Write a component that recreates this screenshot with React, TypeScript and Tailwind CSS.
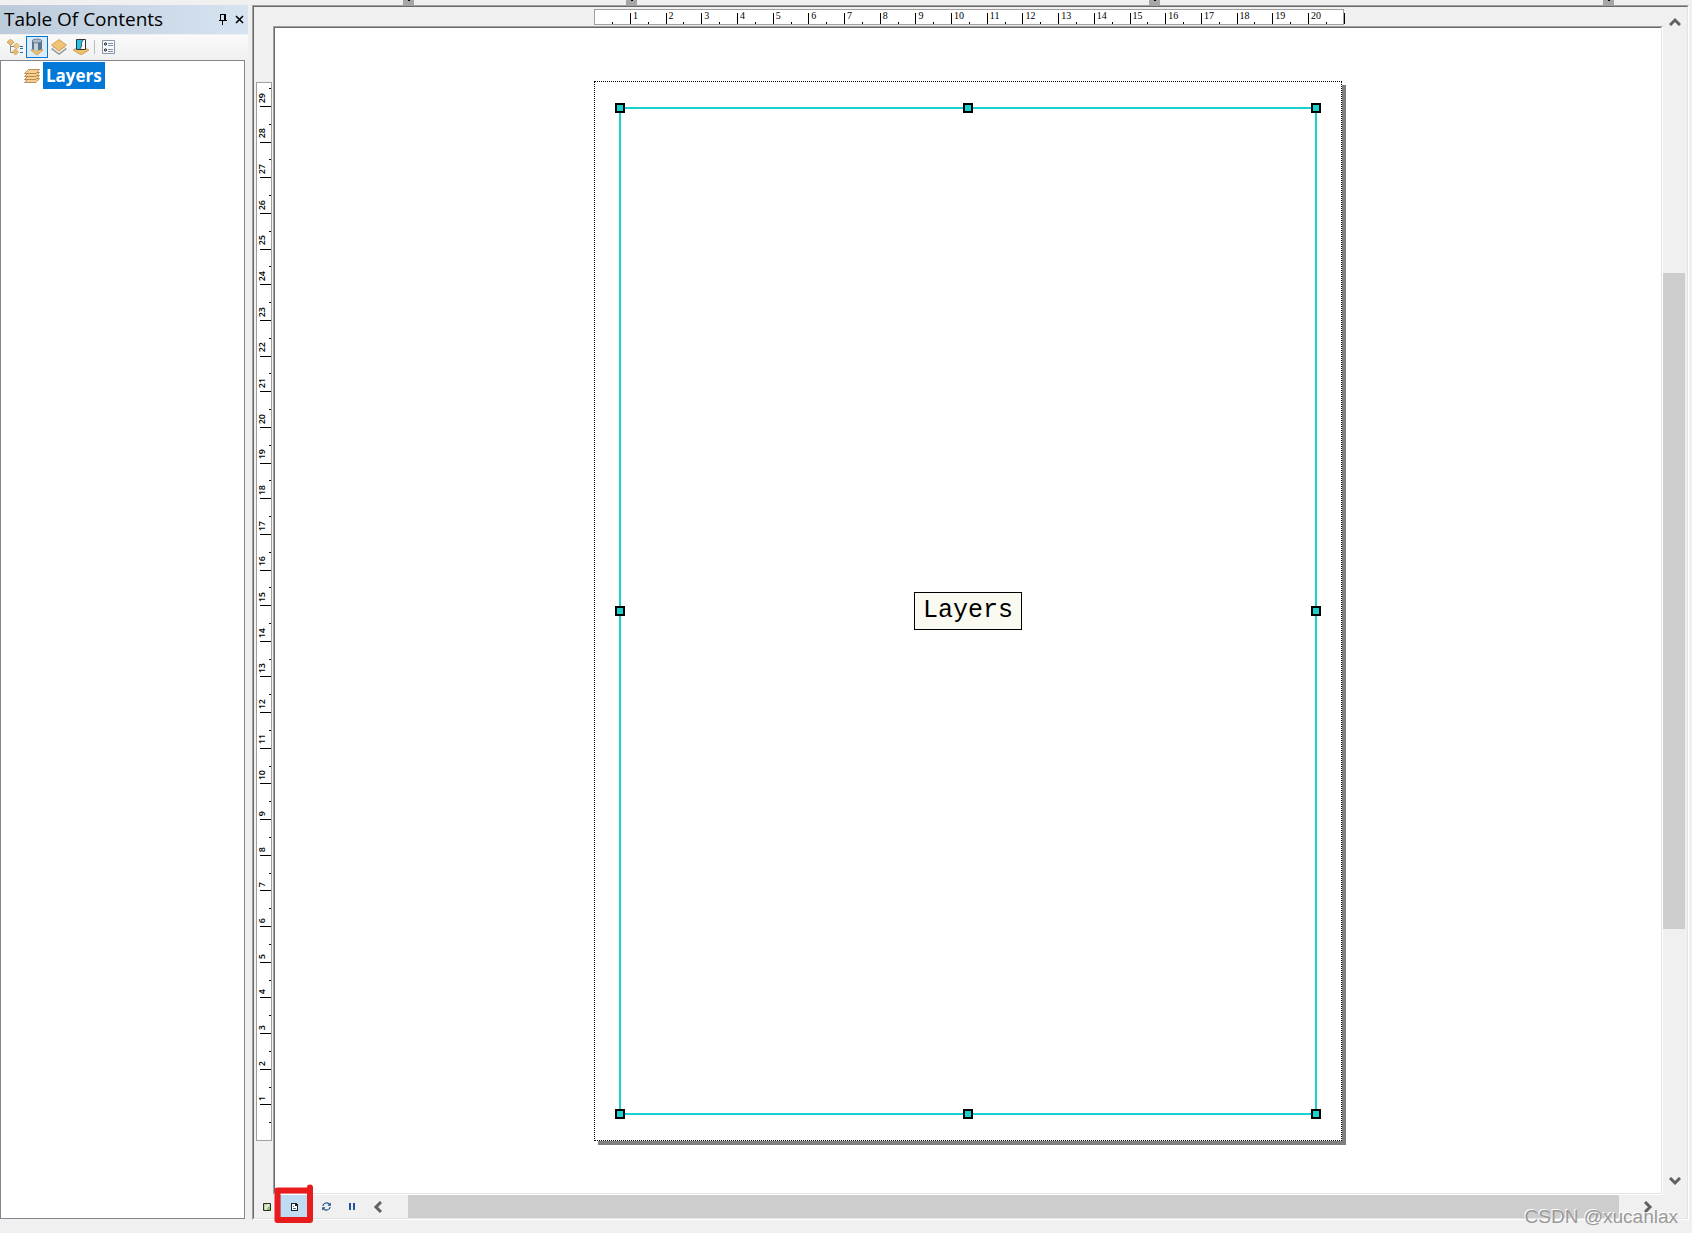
import type { ReactNode } from "react";

const PAGE_WIDTH_CM = 21;
const PAGE_HEIGHT_CM = 29.7;

const range = (n: number) => Array.from({ length: n }, (_, i) => i);

const HANDLES = [
  "left-0 top-0",
  "left-1/2 top-0",
  "left-full top-0",
  "left-0 top-1/2",
  "left-full top-1/2",
  "left-0 top-full",
  "left-1/2 top-full",
  "left-full top-full",
];

/* ---------- icons ---------- */

function PinIcon() {
  return (
    <svg width="8" height="11" viewBox="0 0 8 11" shapeRendering="crispEdges">
      <path d="M1 0h6v1H1zM1 0h1v6H1zM5 0h2v6H5zM0 6h8v1H0zM3 7h1v4H3z" fill="black" />
    </svg>
  );
}

function CloseIcon() {
  return (
    <svg width="9" height="9" viewBox="0 0 9 9">
      <path d="M1 1l7 7M8 1l-7 7" stroke="black" strokeWidth="1.6" />
    </svg>
  );
}

function DrawingOrderIcon() {
  return (
    <svg width="16" height="16" viewBox="0 0 16 16">
      <path d="M3.500 6v7.500H7M4 7.500h4" fill="none" stroke="#8a8a8a" />
      <path d="M3.500 0L7 3.200 3.500 6.500 0 3.200z" fill="#e9bd6c" stroke="#c2914a" strokeWidth=".7" />
      <path d="M9.500 4L12.500 7l-3 3-3-3z" fill="#f3cd80" stroke="#c2914a" strokeWidth=".7" />
      <path d="M8.500 10l3 3-3 3-3-3z" fill="#e9bd6c" stroke="#c2914a" strokeWidth=".7" />
      <path d="M13 7.500h3M13 9.500h3M13 13.500h3" stroke="#1f6f9c" />
    </svg>
  );
}

function SourceIcon() {
  return (
    <svg width="16" height="18" viewBox="0 0 16 18">
      <path d="M2 12l6-3 6 3-6 5z" fill="#efc06a" stroke="#c08b3a" strokeWidth=".7" />
      <path d="M3 3v7.500c0 2.500 10 2.500 10 0V3z" fill="#5f7488" />
      <path d="M5 4v8c1 .6 3 .8 4 .6V4z" fill="#c3d3e2" />
      <ellipse cx="8" cy="3" rx="5" ry="2" fill="#a9bccd" stroke="#4c5f70" strokeWidth=".7" />
    </svg>
  );
}

function VisibilityIcon() {
  return (
    <svg width="16" height="16" viewBox="0 0 16 16">
      <path d="M0 10l8-5 8 5-8 6z" fill="#8e8e8e" />
      <path d="M1.500 9.500L8 5l6.500 4.500L8 14.500z" fill="#e8e8e8" />
      <path d="M.5 6L8 .5 15.500 6 8 12z" fill="#f0c474" stroke="#c08b3a" strokeWidth=".7" />
    </svg>
  );
}

function SelectionIcon() {
  return (
    <svg width="16" height="16" viewBox="0 0 16 16">
      <path d="M0 11l8-4 8 4-8 5z" fill="#efc06a" stroke="#c08b3a" strokeWidth=".7" />
      <path d="M3.500.5h9v10h-9z" fill="white" stroke="#333" />
      <path d="M4 1h6l-2 4 1 1-2 4H4z" fill="#22c3e6" />
      <path d="M10 1L8 5l1 1-2 4" fill="none" stroke="#333" strokeWidth=".8" />
    </svg>
  );
}

function OptionsIcon() {
  return (
    <svg width="13" height="14" viewBox="0 0 13 14">
      <path d="M.5.500h12v13H.5z" fill="#f8fafd" stroke="#8a97a6" />
      <circle cx="3.500" cy="4" r="1.100" fill="none" stroke="#111" />
      <circle cx="3.500" cy="10" r="1.100" fill="none" stroke="#111" />
      <path d="M6 3.500h5M6 5.500h5M6 9.500h5M6 11.500h5" stroke="#7d93ad" />
    </svg>
  );
}

function LayersIcon() {
  return (
    <svg width="16" height="14" viewBox="0 0 16 14" className="shrink-0">
      {[9, 6, 3, 0].map((y) => (
        <path
          key={y}
          d={`M4.500 ${y + 0.5}L15.500 ${y + 0.5} 12 ${y + 4.5} .5 ${y + 4.5}z`}
          fill="#f3cf94"
          stroke="#b07a34"
          strokeWidth=".8"
        />
      ))}
    </svg>
  );
}

function DataViewIcon() {
  return (
    <svg width="8" height="8" viewBox="0 0 8 8">
      <path d="M.5.500h7v7h-7z" fill="#b9d67c" stroke="#2d2d2d" />
      <path d="M4 1h3L3 7H2V4z" fill="#d9ecf2" />
      <path d="M5 4h2v3H4z" fill="#8cc25a" />
    </svg>
  );
}

function LayoutViewIcon() {
  return (
    <svg width="7" height="8" viewBox="0 0 7 8" shapeRendering="crispEdges">
      <path d="M0 0h5l2 2v6H0z" fill="#222" />
      <path d="M1 1h3v2h2v4H1z" fill="white" />
      <path d="M2 3h1v1H2zM2 5h3v1H2z" fill="#3c6fa8" />
    </svg>
  );
}

function RefreshIcon() {
  return (
    <svg width="9" height="9" viewBox="0 0 9 9">
      <path
        d="M.8 4C1.500.5 6 0 7.500 2.500M8.200 5C7.500 8.500 3 9 1.500 6.500"
        fill="none"
        stroke="#124a86"
        strokeWidth="1.200"
      />
      <path d="M8.800.5v3.300H5.500zM.2 8.500V5.200h3.300z" fill="#124a86" />
    </svg>
  );
}

function PauseIcon() {
  return (
    <svg width="6" height="7" viewBox="0 0 6 7" shapeRendering="crispEdges">
      <path d="M0 0h2v7H0zM4 0h2v7H4z" fill="#1e55a0" />
    </svg>
  );
}

function Chevron({ d, w, h }: { d: string; w: number; h: number }) {
  return (
    <svg width={w} height={h} viewBox={`0 0 ${w} ${h}`}>
      <path d={d} fill="none" stroke="#606060" strokeWidth="3" />
    </svg>
  );
}

/* ---------- table of contents ---------- */

function ToolButton({ label, active, children }: { label: string; active?: boolean; children: ReactNode }) {
  return (
    <button
      type="button"
      aria-label={label}
      className={
        active
          ? "flex size-[22px] items-center justify-center border border-[#0078d7] bg-[#dcebf8]"
          : "flex size-[22px] items-center justify-center"
      }
    >
      {children}
    </button>
  );
}

function TableOfContents() {
  return (
    <aside className="flex w-[248px] shrink-0 flex-col pt-[5px]">
      <header className="flex h-[29px] items-center bg-linear-to-r from-[#bccbda] to-[#d6e3f1] pr-1 pl-1">
        <h1 className="flex-1 text-[19px] leading-[29px] whitespace-nowrap">Table Of Contents</h1>
        <button type="button" aria-label="Auto hide" className="mr-2">
          <PinIcon />
        </button>
        <button type="button" aria-label="Close">
          <CloseIcon />
        </button>
      </header>
      <div className="mt-px flex h-[25px] items-center bg-linear-to-b from-[#fafafa] to-[#f0f0f0] pb-px pl-1">
        <ToolButton label="List By Drawing Order">
          <DrawingOrderIcon />
        </ToolButton>
        <ToolButton label="List By Source" active>
          <SourceIcon />
        </ToolButton>
        <ToolButton label="List By Visibility">
          <VisibilityIcon />
        </ToolButton>
        <ToolButton label="List By Selection">
          <SelectionIcon />
        </ToolButton>
        <span className="mx-0.5 h-[14px] w-px bg-[#bdbdbd]" />
        <ToolButton label="Options">
          <OptionsIcon />
        </ToolButton>
      </div>
      <div className="mr-[3px] mb-[14px] flex-1 border border-[#828790] bg-white pt-px pl-[23px]">
        <div className="flex items-center gap-[3px]">
          <LayersIcon />
          <span className="bg-[#0078d7] px-[3px] text-[17px] leading-[27px] font-bold text-white">Layers</span>
        </div>
      </div>
    </aside>
  );
}

/* ---------- rulers ---------- */

function HorizontalRuler() {
  return (
    <div className="relative flex h-4 w-[54%] bg-white py-px font-['Liberation_Serif',serif] text-[10px] leading-[9px] inset-ring inset-ring-[#a0a0a0]">
      {range(PAGE_WIDTH_CM).map((cm) => (
        <div key={cm} className="relative flex min-w-0 flex-1 items-end">
          {cm > 0 && (
            <>
              <span className="h-[11px] w-px shrink-0 bg-black" />
              <span className="self-start pt-px pl-0.5">{cm}</span>
            </>
          )}
          <span className="absolute bottom-0 left-1/2 h-0.5 w-px bg-black" />
        </div>
      ))}
      <span className="absolute bottom-px left-full h-[11px] w-px bg-black" />
    </div>
  );
}

function VerticalRuler() {
  const cells = range(Math.ceil(PAGE_HEIGHT_CM));
  return (
    <div className="flex h-full flex-col-reverse bg-white px-px text-[9px] leading-[9px] font-semibold inset-ring inset-ring-[#a0a0a0]">
      {cells.map((cm) => {
        const size = Math.min(1, PAGE_HEIGHT_CM - cm);
        return (
          <div
            key={cm}
            className="relative flex min-h-0 basis-0 flex-col items-end justify-end"
            style={{ flexGrow: size }}
          >
            {cm > 0 && (
              <>
                <span className="mb-[3px] shrink-0 rotate-180 self-start [writing-mode:vertical-rl]">{cm}</span>
                <span className="h-px w-[11px] shrink-0 bg-black" />
              </>
            )}
            <span className="absolute right-0 h-px w-0.5 bg-black" style={{ bottom: `${50 / size}%` }} />
          </div>
        );
      })}
    </div>
  );
}

/* ---------- layout view ---------- */

function LayoutPage() {
  return (
    <div className="flex min-h-0 flex-1 justify-center border-t border-l border-[#696969] bg-white pt-[53px] pb-[52px]">
      <div className="flex w-[54%] border border-dotted border-black bg-white px-6 py-[25px] shadow-[4px_4px_0_0_#808080]">
        <div className="relative flex flex-1 items-center justify-center border-2 border-[#18d1d1]">
          <div className="border border-black bg-[#fafaf0] px-2 font-['Liberation_Mono',monospace] text-[25px] leading-9">
            Layers
          </div>
          <div className="absolute -inset-px">
            {HANDLES.map((place) => (
              <span
                key={place}
                className={`absolute size-[10px] -translate-x-1/2 -translate-y-1/2 border-2 border-black bg-[#18d1d1] ${place}`}
              />
            ))}
          </div>
        </div>
      </div>
    </div>
  );
}

function VerticalScrollbar() {
  return (
    <div className="mb-[23px] flex w-6 shrink-0 flex-col">
      <button type="button" aria-label="Scroll up" className="flex h-7 items-center justify-center">
        <Chevron w={12} h={9} d="M1 8l5-5 5 5" />
      </button>
      <div className="relative flex-1">
        <div className="absolute top-[21%] right-0.5 left-0 h-[58%] bg-[#cdcdcd]" />
      </div>
      <button type="button" aria-label="Scroll down" className="flex h-7 items-center justify-center">
        <Chevron w={12} h={9} d="M1 1l5 5 5-5" />
      </button>
    </div>
  );
}

function ViewBar() {
  return (
    <div className="relative flex h-[23px] shrink-0 items-center">
      <button type="button" aria-label="Data View" className="flex h-full w-[25px] items-center justify-center">
        <DataViewIcon />
      </button>
      <button
        type="button"
        aria-label="Layout View"
        className="ml-px flex h-full w-7 items-center justify-center border-x border-[#90c4ee] bg-[#c0dcf3]"
      >
        <LayoutViewIcon />
      </button>
      <button type="button" aria-label="Refresh" className="ml-[5px] flex h-full w-[26px] items-center justify-center">
        <RefreshIcon />
      </button>
      <button type="button" aria-label="Pause Drawing" className="flex h-full w-[26px] items-center justify-center">
        <PauseIcon />
      </button>
      <button type="button" aria-label="Scroll left" className="flex h-full w-6 items-center justify-center">
        <Chevron w={9} h={12} d="M8 1L3 6l5 5" />
      </button>
      <div className="ml-[19px] h-full flex-1 bg-[#cdcdcd]" />
      <button type="button" aria-label="Scroll right" className="ml-[14px] flex h-full w-[30px] items-center justify-center">
        <Chevron w={9} h={12} d="M1 1l5 5-5 5" />
      </button>
      {/* hand-drawn marker round the layout view button */}
      <svg className="pointer-events-none absolute -top-[11px] left-5" width="40" height="40" viewBox="0 0 40 40">
        <path
          d="M3.500 6.500H36V36H3.500zM36 3.500V7"
          fill="none"
          stroke="#e81c1c"
          strokeWidth="6"
          strokeLinecap="round"
          strokeLinejoin="round"
        />
      </svg>
    </div>
  );
}

export default function App() {
  return (
    <div className="relative flex h-screen overflow-hidden bg-[#f0f0f0] font-['Open_Sans','Noto_Sans',sans-serif] text-black">
      <TableOfContents />
      <div className="ml-1 flex min-w-0 flex-1 flex-col">
        {/* grips of the docked toolbars above */}
        <div className="relative h-[5px] shrink-0">
          {["left-[10.5%]", "left-[26%]", "left-[62.3%]", "left-[93.8%]"].map((place) => (
            <span key={place} className={`absolute top-0 h-[5px] w-[11px] bg-[#a6a6a6] ${place}`}>
              <span className="absolute top-0 left-[5px] h-px w-0.5 bg-black" />
            </span>
          ))}
        </div>
        <main className="mr-[3px] mb-[13px] flex min-h-0 flex-1 border border-t-[#a0a0a0] border-r-white border-b-white border-l-[#a0a0a0]">
          <div className="flex min-w-0 flex-1 border border-t-[#696969] border-r-[#e3e3e3] border-b-[#e3e3e3] border-l-[#696969]">
            <div className="flex min-w-0 flex-1 flex-col">
              <div className="flex min-h-0 flex-1">
                <div className="w-[19px] shrink-0 pt-[75px] pr-px pb-[54px] pl-0.5">
                  <VerticalRuler />
                </div>
                <div className="flex min-w-0 flex-1 flex-col">
                  <div className="flex h-[19px] shrink-0 justify-center pt-0.5 pl-0.5">
                    <HorizontalRuler />
                  </div>
                  <div className="flex min-h-0 flex-1 border border-t-[#a0a0a0] border-r-white border-b-white border-l-[#a0a0a0]">
                    <div className="flex min-w-0 flex-1 border-r border-b border-[#e3e3e3]">
                      <LayoutPage />
                    </div>
                  </div>
                </div>
              </div>
              <ViewBar />
            </div>
            <VerticalScrollbar />
          </div>
        </main>
      </div>
      <p className="pointer-events-none absolute right-[14px] bottom-1 font-['Liberation_Sans',sans-serif] text-[19px] leading-6 text-[#999999] [text-shadow:-1px_-1px_0_#ffffff]">
        CSDN @xucanlax
      </p>
    </div>
  );
}
